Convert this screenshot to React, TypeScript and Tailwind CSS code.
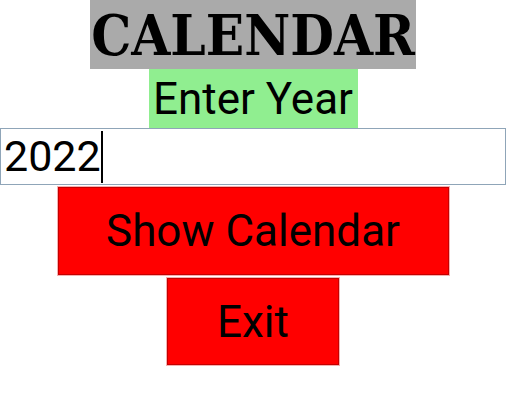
export default function App() {
  return (
    <div className="flex h-[417px] w-[506px] flex-col items-center bg-white font-['Roboto',sans-serif]">
      <div className="flex h-[69px] w-[326px] items-center justify-center bg-[#aaaaaa] font-['DejaVu_Serif_Condensed','DejaVu_Serif',serif] text-[56px] font-bold leading-none text-black font-stretch-condensed">
        CALENDAR
      </div>
      <div className="flex h-[59px] w-[209px] items-center justify-center bg-[#90ee90] text-[44px] leading-none text-black">
        Enter Year
      </div>
      <div className="flex h-[57px] w-[506px] items-center border-[1.5px] border-[#8fa5b8] bg-white pl-[3px]">
        <span className="text-[43px] leading-none text-black">2022</span>
        <span className="h-[52px] w-[2px] bg-black" />
      </div>
      <div className="mt-[2px] flex h-[88px] w-[391px] items-center justify-center border border-[#c40000] bg-[#ff0000] text-[44px] leading-none text-black outline outline-1 outline-[#f6b0b0]">
        Show Calendar
      </div>
      <div className="mt-[3px] flex h-[87px] w-[172px] items-center justify-center border border-[#c40000] bg-[#ff0000] text-[44px] leading-none text-black outline outline-1 outline-[#f6b0b0]">
        Exit
      </div>
    </div>
  );
}
